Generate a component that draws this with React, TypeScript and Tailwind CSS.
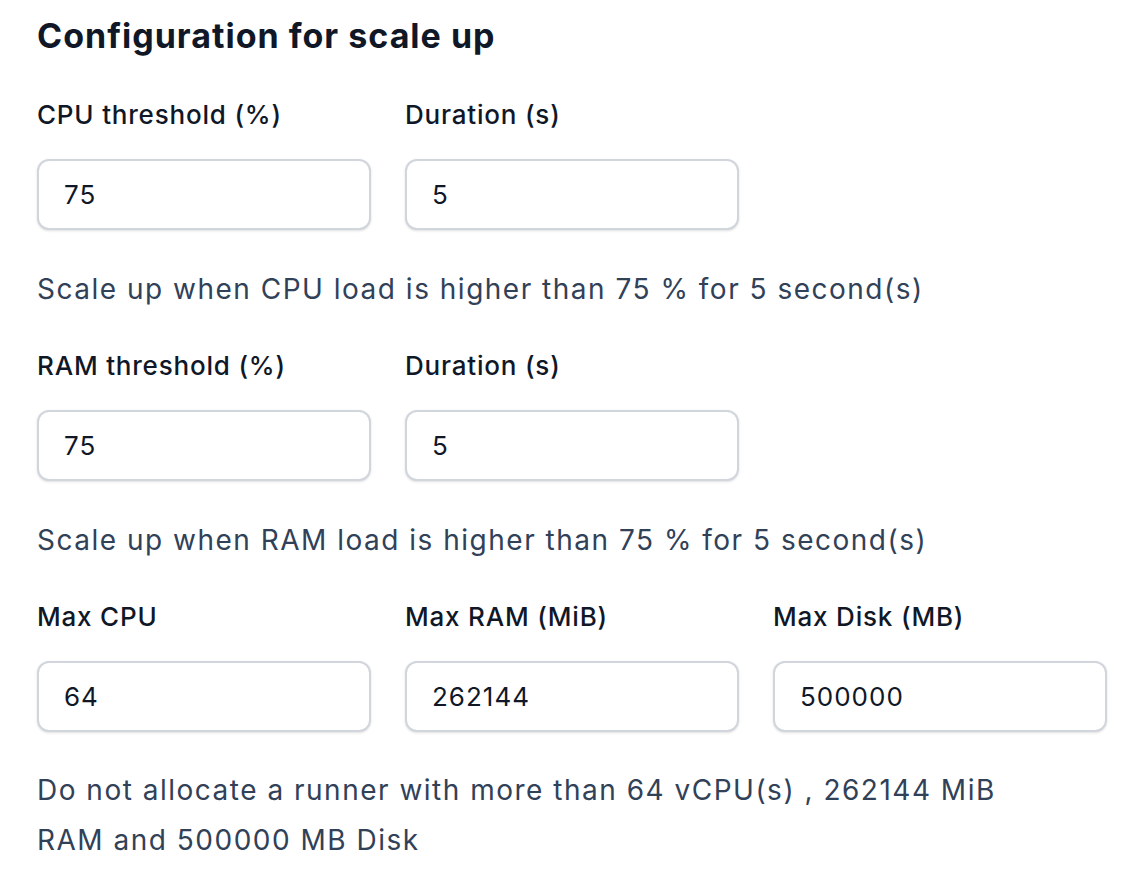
import { useState } from 'react'

interface Field {
  id: string
  label: string
  value: string
}

const font = { fontFamily: 'Inter, "Noto Sans", sans-serif' }

function NumberField({ field, onChange }: { field: Field; onChange: (v: string) => void }) {
  return (
    <div className="flex flex-col">
      <label htmlFor={field.id} className="text-[26px] leading-[36px] font-medium tracking-[0.8px] text-gray-900">
        {field.label}
      </label>
      <input
        id={field.id}
        value={field.value}
        onChange={(e) => onChange(e.target.value)}
        className="mt-[26px] h-[71px] w-full rounded-xl border-2 border-gray-300 bg-white px-[25px] text-[26px] tracking-[1px] text-gray-900 shadow-sm outline-none"
      />
    </div>
  )
}

export default function App() {
  const [values, setValues] = useState<Record<string, string>>({
    cpu: '75',
    cpuDur: '5',
    ram: '75',
    ramDur: '5',
    maxCpu: '64',
    maxRam: '262144',
    maxDisk: '500000',
  })

  const set = (key: string) => (v: string) => setValues((prev) => ({ ...prev, [key]: v }))

  const cpuHint = `Scale up when CPU load is higher than ${values.cpu} % for ${values.cpuDur} second(s)`
  const ramHint = `Scale up when RAM load is higher than ${values.ram} % for ${values.ramDur} second(s)`
  const maxHint = `Do not allocate a runner with more than ${values.maxCpu} vCPU(s) , ${values.maxRam} MiB RAM and ${values.maxDisk} MB Disk`

  return (
    <div className="min-h-screen bg-white pl-[37px] pt-4" style={font}>
      <h2 className="text-[34px] leading-[40px] font-bold tracking-[1px] text-gray-900">Configuration for scale up</h2>

      <div className="mt-[41px] grid grid-cols-[334px_334px] gap-x-[34px]">
        <NumberField field={{ id: 'cpu', label: 'CPU threshold (%)', value: values.cpu }} onChange={set('cpu')} />
        <NumberField field={{ id: 'cpuDur', label: 'Duration (s)', value: values.cpuDur }} onChange={set('cpuDur')} />
      </div>
      <p className="mt-[34px] text-[28px] leading-[50px] tracking-[1.5px] text-slate-700">{cpuHint}</p>

      <div className="mt-[34px] grid grid-cols-[334px_334px] gap-x-[34px]">
        <NumberField field={{ id: 'ram', label: 'RAM threshold (%)', value: values.ram }} onChange={set('ram')} />
        <NumberField field={{ id: 'ramDur', label: 'Duration (s)', value: values.ramDur }} onChange={set('ramDur')} />
      </div>
      <p className="mt-[34px] text-[28px] leading-[50px] tracking-[1.5px] text-slate-700">{ramHint}</p>

      <div className="mt-[34px] grid grid-cols-[334px_334px_334px] gap-x-[34px]">
        <NumberField field={{ id: 'maxCpu', label: 'Max CPU', value: values.maxCpu }} onChange={set('maxCpu')} />
        <NumberField field={{ id: 'maxRam', label: 'Max RAM (MiB)', value: values.maxRam }} onChange={set('maxRam')} />
        <NumberField field={{ id: 'maxDisk', label: 'Max Disk (MB)', value: values.maxDisk }} onChange={set('maxDisk')} />
      </div>
      <p className="mt-[33px] max-w-[1030px] text-[28px] leading-[50px] tracking-[1.5px] text-slate-700">{maxHint}</p>
    </div>
  )
}
